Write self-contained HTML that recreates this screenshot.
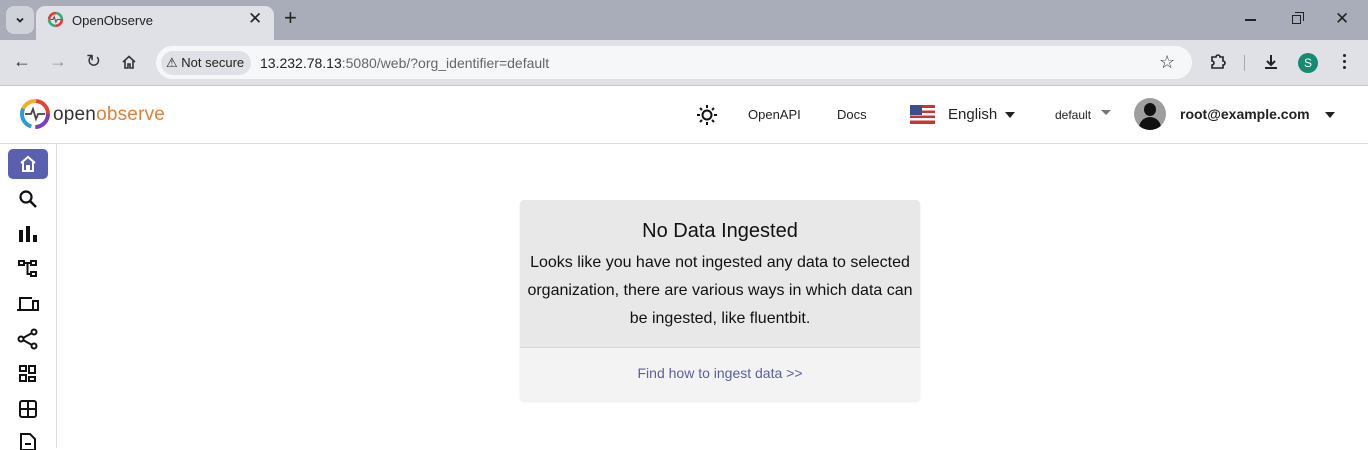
<!DOCTYPE html>
<html><head><meta charset="utf-8"><style>
*{margin:0;padding:0;box-sizing:border-box}
body{width:1368px;height:448px;overflow:hidden;background:#fff;font-family:"Liberation Sans",sans-serif;position:relative}
.abs{position:absolute}
</style></head><body>
<!-- tab strip -->
<div class="abs" style="left:0;top:0;width:1368px;height:40px;background:#a9adb9"></div>
<div class="abs" style="left:6px;top:6px;width:28px;height:28px;border-radius:8px;background:#cfd2d9"></div>
<svg class="abs" style="left:14px;top:14px" width="12" height="12"><path d="M3 4.5l3 3 3-3" stroke="#222" stroke-width="1.8" fill="none"/></svg>
<div class="abs" style="left:36px;top:6px;width:238px;height:36px;background:#dfe1e6;border-radius:9px 9px 0 0"></div>
<svg class="abs" style="left:47px;top:11px" width="17" height="17" viewBox="0 0 20 20"><circle cx="10" cy="10" r="7.5" fill="none" stroke="#e33" stroke-width="3" stroke-dasharray="12 12"/><circle cx="10" cy="10" r="7.5" fill="none" stroke="#3a7" stroke-width="3" stroke-dasharray="12 12" stroke-dashoffset="12"/><path d="M4 10h3l1.5-3 2 6 1.5-3h4" stroke="#555" stroke-width="1.3" fill="none"/></svg>
<div class="abs" style="left:72px;top:13px;font-size:13px;color:#222">OpenObserve</div>
<div class="abs" style="left:248px;top:9px;font-size:17px;color:#222">✕</div>
<div class="abs" style="left:284px;top:5px;font-size:22px;color:#222">+</div>
<div class="abs" style="left:1245px;top:19px;width:11px;height:1.5px;background:#222"></div>
<div class="abs" style="left:1292px;top:15px;width:9px;height:9px;border:1.5px solid #222"></div>
<div class="abs" style="left:1295px;top:12px;width:9px;height:9px;border-top:1.5px solid #222;border-right:1.5px solid #222"></div>
<div class="abs" style="left:1335px;top:9px;font-size:17px;color:#222">✕</div>
<!-- toolbar -->
<div class="abs" style="left:0;top:40px;width:1368px;height:46px;background:#dfe1e6;border-bottom:1px solid #c4c6cb"></div>
<div class="abs" style="left:13px;top:51px;font-size:18px;color:#333">←</div>
<div class="abs" style="left:49px;top:51px;font-size:18px;color:#999">→</div>
<div class="abs" style="left:86px;top:51px;font-size:18px;color:#333">↻</div>
<svg class="abs" style="left:121px;top:54px" width="16" height="16" viewBox="0 0 16 16"><path d="M2 8L8 2.5 14 8M4 6.5V14h3v-4h2v4h3V6.5" stroke="#333" stroke-width="1.6" fill="none"/></svg>
<div class="abs" style="left:156px;top:46px;width:1036px;height:33px;border-radius:17px;background:#f6f7f8"></div>
<div class="abs" style="left:161px;top:51px;width:90px;height:24px;border-radius:12px;background:#dfe1e6"></div>
<div class="abs" style="left:166px;top:55px;font-size:13px;color:#222">⚠ Not secure</div>
<div class="abs" style="left:260px;top:55px;font-size:14px;color:#222">13.232.78.13<span style="color:#666">:5080/web/?org_identifier=default</span></div>
<div class="abs" style="left:1159px;top:52px;font-size:18px;color:#333">☆</div>
<svg class="abs" style="left:1209px;top:53px" width="18" height="18" viewBox="0 0 18 18"><path d="M3 4h4a2 2 0 014 0h3v4a2 2 0 010 4v3H3v-3a2 2 0 000-4z" stroke="#222" stroke-width="1.6" fill="none"/></svg>
<div class="abs" style="left:1244px;top:55px;width:1px;height:16px;background:#aaa"></div>
<svg class="abs" style="left:1262px;top:53px" width="18" height="18" viewBox="0 0 18 18"><path d="M9 2v10M5 8l4 4 4-4M3 15h12" stroke="#222" stroke-width="2" fill="none"/></svg>
<div class="abs" style="left:1298px;top:53px;width:20px;height:20px;border-radius:50%;background:#188a72;color:#fff;font-size:12px;text-align:center;line-height:20px">S</div>
<div class="abs" style="left:1343px;top:54px;width:3px;height:3px;border-radius:50%;background:#222;box-shadow:0 6px #222,0 12px #222"></div>
<!-- app header -->
<div class="abs" style="left:0;top:143px;width:1368px;height:1px;background:#dcdcdc"></div>
<svg class="abs" style="left:19px;top:98px" width="32" height="32" viewBox="0 0 32 32"><circle cx="16" cy="16" r="13" fill="none" stroke="#7b3fb8" stroke-width="4" stroke-dasharray="20 62"/><circle cx="16" cy="16" r="13" fill="none" stroke="#e2452f" stroke-width="4" stroke-dasharray="20 62" stroke-dashoffset="20"/><circle cx="16" cy="16" r="13" fill="none" stroke="#f2b02a" stroke-width="4" stroke-dasharray="20 62" stroke-dashoffset="40"/><circle cx="16" cy="16" r="13" fill="none" stroke="#2d9bd7" stroke-width="4" stroke-dasharray="22 62" stroke-dashoffset="60"/><path d="M6 16h6l2-5 3 10 2-5h7" stroke="#444" stroke-width="1.8" fill="none"/></svg>
<div class="abs" style="left:53px;top:104px;font-size:19px;letter-spacing:0.2px;color:#333">open<span style="color:#e0803a">observe</span></div>
<svg class="abs" style="left:695px;top:103px" width="24" height="24" viewBox="0 0 24 24"><circle cx="12" cy="12" r="4.5" fill="none" stroke="#111" stroke-width="2"/><path d="M12 2v3M12 19v3M2 12h3M19 12h3M5 5l2 2M17 17l2 2M5 19l2-2M17 7l2-2" stroke="#111" stroke-width="2"/></svg>
<div class="abs" style="left:748px;top:107px;font-size:13px;color:#222">OpenAPI</div>
<div class="abs" style="left:837px;top:107px;font-size:13px;color:#222">Docs</div>
<svg class="abs" style="left:910px;top:105px" width="25" height="19"><rect width="25" height="19" fill="#c33"/><rect y="3" width="25" height="2.5" fill="#fff"/><rect y="8" width="25" height="2.5" fill="#fff"/><rect y="13" width="25" height="2.5" fill="#fff"/><rect width="12" height="10" fill="#3b4f8f"/></svg>
<div class="abs" style="left:948px;top:106px;font-size:15px;color:#222">English</div>
<div class="abs" style="left:1005px;top:112px;border:5px solid transparent;border-top:6px solid #222"></div>
<div class="abs" style="left:1055px;top:108px;font-size:12px;color:#222">default</div>
<div class="abs" style="left:1101px;top:110px;border:5px solid transparent;border-top:5px solid #777"></div>
<div class="abs" style="left:1134px;top:98px;width:32px;height:32px;border-radius:50%;background:#9e9e9e;overflow:hidden"><div style="position:absolute;left:10px;top:5px;width:12px;height:13px;border-radius:50%;background:#111"></div><div style="position:absolute;left:5px;top:19px;width:22px;height:16px;border-radius:11px 11px 0 0;background:#111"></div></div>
<div class="abs" style="left:1180px;top:106px;font-size:14px;font-weight:bold;color:#222">root@example.com</div>
<div class="abs" style="left:1325px;top:112px;border:5px solid transparent;border-top:6px solid #222"></div>
<!-- sidebar -->
<div class="abs" style="left:56px;top:144px;width:1px;height:304px;background:#dcdcdc"></div>
<div class="abs" style="left:8px;top:149px;width:40px;height:30px;border-radius:5px;background:#5b5fb0"></div>
<svg class="abs" style="left:18px;top:154px" width="20" height="20" viewBox="0 0 20 20"><path d="M3 9l7-6 7 6M5 8v9h4v-5h2v5h4V8" stroke="#fff" stroke-width="2" fill="none"/></svg>
<svg class="abs" style="left:17px;top:188px" width="22" height="22" viewBox="0 0 22 22"><circle cx="9" cy="9" r="5.5" fill="none" stroke="#111" stroke-width="2.2"/><path d="M13 13l6 6" stroke="#111" stroke-width="2.5"/></svg>
<svg class="abs" style="left:17px;top:224px" width="22" height="20"><rect x="2" y="6" width="4" height="12" fill="#111"/><rect x="9" y="2" width="4" height="16" fill="#111"/><rect x="16" y="11" width="4" height="7" fill="#111"/></svg>
<svg class="abs" style="left:17px;top:258px" width="22" height="22" viewBox="0 0 22 22" fill="none" stroke="#111" stroke-width="2"><rect x="2" y="3" width="5" height="4"/><rect x="14" y="3" width="5" height="4"/><rect x="14" y="14" width="5" height="4"/><path d="M7 5h7M10.5 5v11h3.5"/></svg>
<svg class="abs" style="left:16px;top:294px" width="24" height="20" viewBox="0 0 24 20" fill="none" stroke="#111" stroke-width="2"><path d="M4 15V4h12M1 16h15"/><rect x="17" y="7" width="5" height="9"/></svg>
<svg class="abs" style="left:17px;top:328px" width="22" height="22" viewBox="0 0 22 22" fill="none" stroke="#111" stroke-width="2"><circle cx="4" cy="11" r="2.5"/><circle cx="17" cy="4" r="2.5"/><circle cx="17" cy="18" r="2.5"/><path d="M6 10l9-5M6 12l9 5"/></svg>
<svg class="abs" style="left:18px;top:364px" width="20" height="20" viewBox="0 0 20 20" fill="none" stroke="#111" stroke-width="2"><rect x="2" y="2" width="6" height="5"/><rect x="2" y="11" width="6" height="6"/><rect x="11" y="2" width="6" height="7"/><rect x="11" y="13" width="6" height="4"/></svg>
<svg class="abs" style="left:18px;top:399px" width="20" height="20" viewBox="0 0 20 20" fill="none" stroke="#111" stroke-width="2"><rect x="2" y="2" width="16" height="16" rx="2"/><path d="M10 2v16M2 10h16"/></svg>
<svg class="abs" style="left:19px;top:432px" width="18" height="18" viewBox="0 0 18 18" fill="none" stroke="#111" stroke-width="2"><path d="M2 2h9l5 5v11H2z"/><path d="M6 12h6"/></svg>
<!-- card -->
<div class="abs" style="left:520px;top:200px;width:400px;height:201px;border-radius:4px;background:#f3f3f3;overflow:hidden;box-shadow:0 1px 2px rgba(0,0,0,0.08)">
<div style="height:148px;background:#e8e8e8;border-bottom:1px solid #d6d6d6;text-align:center;padding:0 2px">
<div style="padding-top:20px;font-size:20px;color:#111">No Data Ingested</div>
<div style="margin-top:6px;font-size:16px;line-height:28px;color:#111">Looks like you have not ingested any data to selected organization, there are various ways in which data can be ingested, like fluentbit.</div>
</div>
<div style="text-align:center;padding-top:17px;font-size:14px;color:#5b5fa0">Find how to ingest data &gt;&gt;</div>
</div>
</body></html>
